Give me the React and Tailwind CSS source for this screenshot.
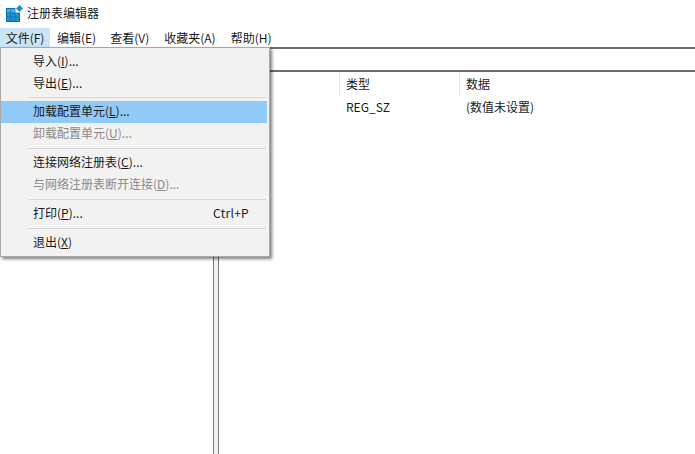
const font = { fontFamily: '"Noto Sans CJK SC", "Liberation Sans", sans-serif' };

function RegIcon() {
  return (
    <svg width="17" height="17" viewBox="0 0 17 17">
      <rect x="0" y="3" width="14" height="14" fill="#0f6fa8" />
      <g fill="#1f93d6">
        <rect x="1" y="4" width="3.5" height="3.5" fill="#4db4e6" />
        <rect x="5.2" y="4" width="3.5" height="3.5" fill="#4db4e6" />
        <rect x="1" y="8.2" width="3.5" height="3.5" />
        <rect x="5.2" y="8.2" width="3.5" height="3.5" />
        <rect x="9.4" y="8.2" width="3.5" height="3.5" />
        <rect x="1" y="12.4" width="3.5" height="3.5" />
        <rect x="5.2" y="12.4" width="3.5" height="3.5" />
        <rect x="9.4" y="12.4" width="3.5" height="3.5" />
      </g>
      <rect x="9.4" y="3" width="4.6" height="4.6" fill="#fff" />
      <path d="M13.5 0 L17 3.5 L13.5 7 L10 3.5 Z" fill="#1a8ccf" />
    </svg>
  );
}

function MenuItem({ label, hotkey, suffix, shortcut, disabled, active }) {
  return (
    <div className={`flex items-center justify-between h-[22px] pb-[2px] pl-[32px] pr-[18px] text-[12px] ${active ? 'bg-[#91c9f7]' : ''} ${disabled ? 'text-[#8a8a8a]' : 'text-[#1a1a1a]'}`}>
      <span>
        {label}(<span className="underline">{hotkey}</span>){suffix}
      </span>
      {shortcut && <span className="tracking-[0.3px]">{shortcut}</span>}
    </div>
  );
}

function Sep({ first }) {
  return <div className={`h-px bg-[#d7d7d7] ml-[28px] mr-[1px] mb-[3px] ${first ? 'mt-[2px]' : 'mt-[3px]'}`} />;
}

function FileMenu() {
  return (
    <div className="absolute left-0 top-[47px] w-[270px] h-[210px] bg-[#f2f2f2] border border-[#a8a8a8] pt-[3px] pr-[2px] shadow-[2px_2px_3px_rgba(0,0,0,0.5)]">
      <MenuItem label="导入" hotkey="I" suffix="..." />
      <MenuItem label="导出" hotkey="E" suffix="..." />
      <Sep first />
      <MenuItem label="加载配置单元" hotkey="L" suffix="..." active />
      <MenuItem label="卸载配置单元" hotkey="U" suffix="..." disabled />
      <Sep />
      <MenuItem label="连接网络注册表" hotkey="C" suffix="..." />
      <MenuItem label="与网络注册表断开连接" hotkey="D" suffix="..." disabled />
      <Sep />
      <MenuItem label="打印" hotkey="P" suffix="..." shortcut="Ctrl+P" />
      <Sep />
      <MenuItem label="退出" hotkey="X" />
    </div>
  );
}

export default function App() {
  return (
    <div className="relative w-[695px] h-[454px] overflow-hidden bg-white flex flex-col text-[12px] text-[#1a1a1a]" style={font}>
      <div className="h-[26px] flex items-center pl-[6px] gap-[4px]">
        <RegIcon />
        <span>注册表编辑器</span>
      </div>
      <div className="h-[19px] mt-[2px] flex items-center">
        <div className="h-full w-[50px] flex items-center justify-center bg-[#cce4f7]">文件(F)</div>
        <div className="ml-[7px]">编辑(E)</div>
        <div className="ml-[14px]">查看(V)</div>
        <div className="ml-[15px]">收藏夹(A)</div>
        <div className="ml-[15px]">帮助(H)</div>
      </div>
      <div className="h-[25px] border-t-2 border-[#6e6e6e] border-b-2 shrink-0" />
      <div className="flex-1 flex min-h-0">
        <div className="w-[213px] shrink-0" />
        <div className="w-[6px] shrink-0 bg-[#f0f0f0] border-x border-[#7a7a7a]" />
        <div className="flex-1">
          <div className="h-[24px] flex items-center">
            <div className="w-[120px] h-full" />
            <div className="w-[120px] h-full border-l border-[#e5e5e5] pl-[6px] flex items-center">类型</div>
            <div className="flex-1 h-full border-l border-[#e5e5e5] pl-[6px] flex items-center">数据</div>
          </div>
          <div className="h-[22px] flex items-center">
            <div className="w-[120px] pl-[17px]">(默认)</div>
            <div className="w-[120px] pl-[7px]">REG_SZ</div>
            <div className="pl-[7px]">(数值未设置)</div>
          </div>
        </div>
      </div>
      <FileMenu />
    </div>
  );
}
